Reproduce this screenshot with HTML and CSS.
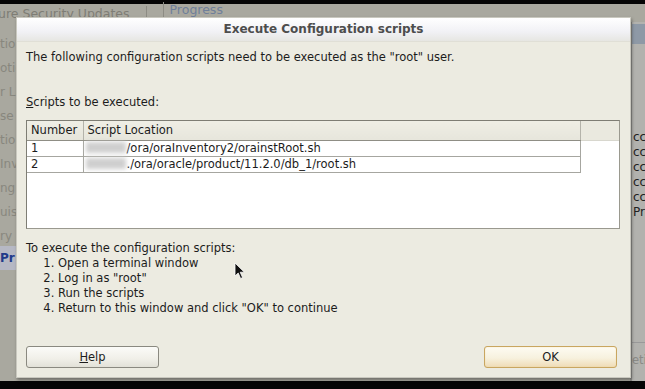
FILE: index.html
```html
<!DOCTYPE html>
<html lang="en">
<head>
  <meta charset="UTF-8" />
  <title>Execute Configuration scripts</title>
  <link rel="stylesheet" href="styles.css">
</head>
<body>
  <div class="screen">
    <div class="bar"></div>
    <div class="app">
      <div class="app-head">
        <span class="crumb">ure Security Updates</span>
        <span class="sep"></span>
        <span class="tab">Progress</span>
      </div>
      <div class="app-body">
        <ul class="steps">
          <li>tio</li>
          <li>otic</li>
          <li>r La</li>
          <li>se</li>
          <li>tio</li>
          <li>Inv</li>
          <li>ng</li>
          <li>uis</li>
          <li>ry</li>
          <li class="current">Pr</li>
        </ul>
        <div class="main"></div>
        <div class="side">
          <div class="side-head"></div>
          <ul class="side-list">
            <li>cc</li>
            <li>cc</li>
            <li>cc</li>
            <li>cc</li>
            <li>cc</li>
            <li>Pro</li>
          </ul>
          <div class="side-foot">eti</div>
        </div>
      </div>
    </div>
    <div class="bar bottom"></div>

    <div class="dialog">
      <div class="title">Execute Configuration scripts</div>
      <div class="content">
        <p class="intro">The following configuration scripts need to be executed as the "root" user.</p>
        <p class="label"><u>S</u>cripts to be executed:</p>
        <div class="grid">
          <table>
            <thead>
              <tr><th class="num">Number</th><th class="loc">Script Location</th><th class="fill"></th></tr>
            </thead>
            <tbody>
              <tr><td class="num">1</td><td class="loc"><span class="blur"></span>/ora/oraInventory2/orainstRoot.sh</td><td class="fill"></td></tr>
              <tr><td class="num">2</td><td class="loc"><span class="blur"></span>./ora/oracle/product/11.2.0/db_1/root.sh</td><td class="fill"></td></tr>
            </tbody>
          </table>
        </div>
        <p class="how">To execute the configuration scripts:</p>
        <ol class="how-list">
          <li>Open a terminal window</li>
          <li>Log in as "root"</li>
          <li>Run the scripts</li>
          <li>Return to this window and click "OK" to continue</li>
        </ol>
        <div class="buttons">
          <button class="btn"><u>H</u>elp</button>
          <button class="btn default">OK</button>
        </div>
      </div>
    </div>

    <svg class="cursor" width="12" height="18" viewBox="0 0 12 18">
      <path d="M1 1 L1 14 L4.2 11 L6.6 16.5 L8.6 15.6 L6.2 10.2 L10.4 10.2 Z" fill="#111" stroke="#fff" stroke-width="0.8"/>
    </svg>
  </div>
</body>
</html>
```

FILE: styles.css
```css
* { box-sizing: border-box; }
body { margin: 0; background: #000; font-family: "DejaVu Sans", sans-serif; font-size: 11.5px; color: #1c1c1c; }
.screen { position: relative; width: 645px; height: 389px; overflow: hidden; display: flex; flex-direction: column; }
.bar { height: 4px; background: #050505; }
.bar.bottom { height: 8px; }

/* background installer window */
.app { flex: 1; display: flex; flex-direction: column; background: #a9a89f; }
.app-head { height: 18px; display: flex; align-items: center; gap: 16px; color: #7e7d75; font-size: 12.5px; white-space: nowrap; }
.crumb { margin-left: -2px; }
.sep { width: 1px; height: 14px; background: #8d8c84; }
.tab { color: #6f7f9a; border-left: 1px solid #8d8c84; padding-left: 6px; margin-top: -8px; }
.app-body { flex: 1; display: flex; }
.steps { list-style: none; margin: 0; padding: 10px 0 0; width: 16px; color: #88877e; font-size: 12px; white-space: nowrap; overflow: hidden; }
.steps li { height: 24px; line-height: 24px; }
.steps li.current { color: #223a8a; font-weight: bold; background: #b6b8c4; margin-top: -2px; }
.main { flex: 1; }
.side { width: 15px; background: #b2b2ae; border-left: 2px solid #8e8e8a; color: #222; overflow: hidden; display: flex; flex-direction: column; white-space: nowrap; }
.side-head { height: 20px; margin-top: 2px; background: #8e99a6; }
.side-list { list-style: none; margin: 86px 0 0; padding: 0 0 0 1px; font-size: 12px; }
.side-list li { height: 15px; line-height: 15px; }
.side-foot { margin-top: auto; margin-bottom: 14px; color: #8a8a86; border-top: 1px solid #999; padding-top: 10px; }

/* dialog */
.dialog { position: absolute; left: 16px; top: 17px; width: 615px; height: 361px; background: #ecebe1; border: 1px solid #c9c8bf; box-shadow: 1px 2px 3px rgba(0, 0, 0, 0.35); display: flex; flex-direction: column; }
.title { height: 24px; line-height: 23px; text-align: center; font-weight: bold; font-size: 12px; color: #4d4d4d; background: linear-gradient(#ffffff, #f1f1f5 60%, #e6e6e2); border-bottom: 1px solid #e0dfd6; }
.content { flex: 1; display: flex; flex-direction: column; padding: 0 10px 9px 9px; line-height: 15px; }
.content p { margin: 0; }
.intro { margin-top: 8px !important; }
.label { margin-top: 30px !important; }
.grid { margin-top: 10px; height: 109px; background: #fff; border: 1px solid #9a998f; border-left-color: #7e7d74; border-top-color: #7e7d74; }
table { width: 100%; border-collapse: collapse; }
th { height: 19px; padding: 1px 0 0 4px; font-weight: normal; text-align: left; background: linear-gradient(#efeee5, #e6e5db); border-bottom: 1px solid #8f8e85; border-right: 1px solid #b4b3aa; }
th.num, td.num { width: 56px; }
th.loc, td.loc { width: 497px; }
th.fill { border-right: none; border-bottom-color: #d8d7ce; background: #eae9df; }
td { height: 16px; padding: 0 0 0 4px; white-space: nowrap; }
td.num, td.loc { border-right: 1px solid #a6a6a0; border-bottom: 1px solid #a6a6a0; }
td.loc { padding-left: 2px; }
.blur { display: inline-block; width: 40px; height: 11px; vertical-align: -1px; background: #cfcfcf; filter: blur(2px); margin-right: 1px; }
.how { margin-top: 12px !important; }
.how-list { margin: 0; padding-left: 32px; }
.buttons { margin-top: auto; display: flex; justify-content: space-between; }
.btn { width: 133px; height: 22px; font-family: inherit; font-size: 11.5px; color: #1c1c1c; border: 1px solid #8a8980; border-radius: 3px; background: linear-gradient(#fbfbf8, #f0efe8 60%, #e2e1d8); }
.btn.default { border-color: #c9a660; background: linear-gradient(#fdfbf2, #f7f1de 55%, #efdcb6); box-shadow: inset 0 0 1px #e8c888; margin-right: 3px; }

.cursor { position: absolute; left: 234px; top: 262px; }
```
